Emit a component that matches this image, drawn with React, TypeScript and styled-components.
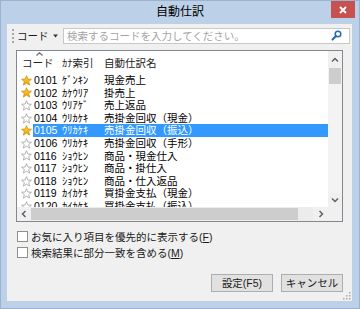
import styled, { createGlobalStyle } from "styled-components";

const GlobalStyle = createGlobalStyle`
  html, body {
    margin: 0;
    padding: 0;
    background: #bcd1e8;
  }
  body {
    font-family: "Liberation Sans", "Noto Sans CJK JP", sans-serif;
    font-size: 10.5px;
    color: #000;
  }
`;

const StyledWindow = styled.div`
  width: 360px;
  height: 309px;
  box-sizing: border-box;
  display: flex;
  flex-direction: column;
  background: #bcd1e8;
  border: 1px solid #9ab3d1;
`;

const StyledTitleBar = styled.div`
  height: 23px;
  display: grid;
  grid-template-columns: 1fr auto 1fr;
`;

const StyledTitle = styled.div`
  grid-column: 2;
  line-height: 23px;
  font-size: 12px;
  color: #000;
`;

const StyledClose = styled.div`
  grid-column: 3;
  justify-self: end;
  align-self: start;
  margin-right: 4px;
  width: 24px;
  height: 17px;
  background: #c75050;
  display: flex;
  align-items: center;
  justify-content: center;
`;

const StyledClient = styled.div`
  position: relative;
  flex: 1;
  margin: 0 7px 7px 6px;
  background: #f0f0f0;
  display: flex;
  flex-direction: column;
`;

const StyledToolbar = styled.div`
  height: 23px;
  display: flex;
  align-items: center;
  padding: 0 2px 0 5px;
`;

const StyledGrip = styled.span`
  width: 0;
  height: 14px;
  border-left: 2px dotted #a8a8a8;
`;

const StyledDropLabel = styled.div`
  width: 46px;
  margin-left: 3px;
  box-sizing: border-box;
  display: flex;
  align-items: center;
  gap: 4px;
  color: #1a1a1a;
`;

const StyledSearchBox = styled.div`
  flex: 1;
  height: 16px;
  box-sizing: border-box;
  border: 1px solid #c8c8c8;
  background: #fff;
  display: flex;
  align-items: center;
  justify-content: space-between;
  padding: 0 7px 0 3px;
  color: #a3a3a3;
  line-height: 14px;
`;

const StyledList = styled.div`
  margin: 3px 9px 0 9px;
  height: 172px;
  box-sizing: border-box;
  border: 1px solid #828790;
  background: #fff;
  display: grid;
  grid-template-columns: 1fr 14px;
  grid-template-rows: 1fr 14px;
`;

const StyledContent = styled.div`
  min-height: 0;
  overflow: hidden;
`;

const StyledHeader = styled.div`
  height: 23px;
  display: flex;
  align-items: center;
  color: #222;
`;

const StyledHeadCell = styled.div<{ $width?: number; $pad?: number }>`
  position: relative;
  width: ${(p) => (p.$width ? `${p.$width}px` : "auto")};
  flex: ${(p) => (p.$width ? "none" : "1")};
  padding-left: ${(p) => p.$pad ?? 0}px;
  box-sizing: border-box;
  white-space: nowrap;
`;

const StyledSortMark = styled.span`
  position: absolute;
  left: 19px;
  top: -3px;
  display: flex;
`;

const StyledRow = styled.div`
  height: 12.6px;
  display: flex;
  align-items: stretch;
  white-space: nowrap;
`;

const StyledStarCell = styled.div`
  width: 16px;
  flex: none;
  padding-left: 4px;
  box-sizing: border-box;
  display: flex;
  align-items: center;
`;

const StyledRowBody = styled.div<{ $selected: boolean }>`
  flex: 1;
  display: flex;
  align-items: center;
  background: ${(p) => (p.$selected ? "#3399ff" : "transparent")};
  color: ${(p) => (p.$selected ? "#fff" : "#000")};
  line-height: 12.6px;
`;

const StyledCell = styled.div<{ $width?: number; $pad?: number }>`
  width: ${(p) => (p.$width ? `${p.$width}px` : "auto")};
  flex: ${(p) => (p.$width ? "none" : "1")};
  padding-left: ${(p) => p.$pad ?? 0}px;
  box-sizing: border-box;
  overflow: hidden;
`;

const StyledVScroll = styled.div`
  background: #f3f3f3;
  display: flex;
  flex-direction: column;
  align-items: stretch;
`;

const StyledHScroll = styled.div`
  background: #ececec;
  display: flex;
  align-items: stretch;
`;

const StyledArrowBox = styled.div<{ $size: number; $vertical?: boolean }>`
  flex: none;
  ${(p) => (p.$vertical ? `height: ${p.$size}px;` : `width: ${p.$size}px;`)}
  display: flex;
  align-items: center;
  justify-content: center;
  background: #f0f0f0;
`;

const StyledThumb = styled.div<{ $length: number; $vertical?: boolean }>`
  flex: none;
  background: #cdcdcd;
  ${(p) =>
    p.$vertical
      ? `height: ${p.$length}px; margin: 0 1px;`
      : `width: ${p.$length}px; margin: 1px 0;`}
`;

const StyledSpacer = styled.div`
  flex: 1;
`;

const StyledCorner = styled.div`
  background: #f0f0f0;
`;

const StyledChecks = styled.div`
  margin-top: 6px;
  padding-left: 10px;
  display: flex;
  flex-direction: column;
`;

const StyledCheckRow = styled.label`
  height: 16px;
  display: flex;
  align-items: center;
  gap: 3px;
  color: #1a1a1a;
`;

const StyledCheckBox = styled.span`
  width: 11px;
  height: 11px;
  box-sizing: border-box;
  border: 1px solid #8f8f8f;
  background: #fff;
`;

const StyledButtons = styled.div`
  margin-top: auto;
  display: flex;
  justify-content: flex-end;
  gap: 8px;
  padding: 0 9px 9px 0;
`;

const StyledButton = styled.button`
  width: 62px;
  height: 18px;
  box-sizing: border-box;
  border: 1px solid #adadad;
  background: #e1e1e1;
  font-family: "Liberation Sans", "Noto Sans CJK JP", sans-serif;
  font-size: 10.5px;
  color: #1a1a1a;
  padding: 0;
  line-height: 16px;
`;

const StyledResizeGrip = styled.div`
  position: absolute;
  right: 1px;
  bottom: 1px;
  display: flex;
`;

type Entry = { code: string; kana: string; name: string; fav: boolean };

const entries: Entry[] = [
  { code: "0101", kana: "ｹﾞﾝｷﾝ", name: "現金売上", fav: true },
  { code: "0102", kana: "ｶｹｳﾘｱ", name: "掛売上", fav: true },
  { code: "0103", kana: "ｳﾘｱｹﾞ", name: "売上返品", fav: false },
  { code: "0104", kana: "ｳﾘｶｹｷ", name: "売掛金回収（現金）", fav: false },
  { code: "0105", kana: "ｳﾘｶｹｷ", name: "売掛金回収（振込）", fav: true },
  { code: "0106", kana: "ｳﾘｶｹｷ", name: "売掛金回収（手形）", fav: false },
  { code: "0116", kana: "ｼｮｳﾋﾝ", name: "商品・現金仕入", fav: false },
  { code: "0117", kana: "ｼｮｳﾋﾝ", name: "商品・掛仕入", fav: false },
  { code: "0118", kana: "ｼｮｳﾋﾝ", name: "商品・仕入返品", fav: false },
  { code: "0119", kana: "ｶｲｶｹｷ", name: "買掛金支払（現金）", fav: false },
  { code: "0120", kana: "ｶｲｶｹｷ", name: "買掛金支払（振込）", fav: false },
];

const selectedCode = "0105";

function Star({ filled }: { filled: boolean }) {
  return (
    <svg width="11" height="11" viewBox="0 0 24 24">
      <defs>
        <linearGradient id="starGold" x1="0" y1="0" x2="0" y2="1">
          <stop offset="0" stopColor="#ffd54a" />
          <stop offset="1" stopColor="#f0a000" />
        </linearGradient>
      </defs>
      <polygon
        points="12,1.5 15,8.8 22.8,9.3 16.8,14.3 18.8,22 12,17.7 5.2,22 7.2,14.3 1.2,9.3 9,8.8"
        fill={filled ? "url(#starGold)" : "#fff"}
        stroke={filled ? "#d08800" : "#9a9a9a"}
        strokeWidth="1.6"
        strokeLinejoin="round"
      />
    </svg>
  );
}

function Chevron({ dir }: { dir: "up" | "down" | "left" | "right" }) {
  const rotate = { up: 0, right: 90, down: 180, left: 270 }[dir];
  return (
    <svg width="8" height="8" viewBox="0 0 8 8" style={{ transform: `rotate(${rotate}deg)` }}>
      <path d="M1 5.5 L4 2.5 L7 5.5" fill="none" stroke="#606060" strokeWidth="1.5" />
    </svg>
  );
}

export default function App() {
  return (
    <>
      <GlobalStyle />
      <StyledWindow>
        <StyledTitleBar>
          <StyledTitle>自動仕訳</StyledTitle>
          <StyledClose>
            <svg width="8" height="8" viewBox="0 0 8 8">
              <path d="M1 1 L7 7 M7 1 L1 7" stroke="#fff" strokeWidth="1.8" />
            </svg>
          </StyledClose>
        </StyledTitleBar>

        <StyledClient>
          <StyledToolbar>
            <StyledGrip />
            <StyledDropLabel>
              コード
              <svg width="5" height="4" viewBox="0 0 5 4">
                <path d="M0 0.5 L5 0.5 L2.5 3.5 Z" fill="#333" />
              </svg>
            </StyledDropLabel>
            <StyledSearchBox>
              検索するコードを入力してください。
              <svg width="11" height="11" viewBox="0 0 11 11">
                <circle cx="7" cy="4" r="2.8" fill="none" stroke="#2467b3" strokeWidth="1.5" />
                <path d="M5 6 L1.5 9.5" stroke="#2467b3" strokeWidth="2" strokeLinecap="round" />
              </svg>
            </StyledSearchBox>
          </StyledToolbar>

          <StyledList>
            <StyledContent>
              <StyledHeader>
                <StyledHeadCell $width={45} $pad={5}>
                  コード
                  <StyledSortMark>
                    <svg width="7" height="4" viewBox="0 0 7 4">
                      <path d="M0.5 3.5 L3.5 0.8 L6.5 3.5" fill="none" stroke="#6a6a6a" strokeWidth="1.2" />
                    </svg>
                  </StyledSortMark>
                </StyledHeadCell>
                <StyledHeadCell $width={42}>ｶﾅ索引</StyledHeadCell>
                <StyledHeadCell>自動仕訳名</StyledHeadCell>
              </StyledHeader>
              {entries.map((e) => (
                <StyledRow key={e.code}>
                  <StyledStarCell>
                    <Star filled={e.fav} />
                  </StyledStarCell>
                  <StyledRowBody $selected={e.code === selectedCode}>
                    <StyledCell $width={29} $pad={1}>
                      {e.code}
                    </StyledCell>
                    <StyledCell $width={42}>{e.kana}</StyledCell>
                    <StyledCell>{e.name}</StyledCell>
                  </StyledRowBody>
                </StyledRow>
              ))}
            </StyledContent>

            <StyledVScroll>
              <StyledArrowBox $size={17} $vertical>
                <Chevron dir="up" />
              </StyledArrowBox>
              <StyledThumb $length={16} $vertical />
              <StyledSpacer />
              <StyledArrowBox $size={14} $vertical>
                <Chevron dir="down" />
              </StyledArrowBox>
            </StyledVScroll>

            <StyledHScroll>
              <StyledArrowBox $size={14}>
                <Chevron dir="left" />
              </StyledArrowBox>
              <StyledThumb $length={267} />
              <StyledSpacer />
              <StyledArrowBox $size={15}>
                <Chevron dir="right" />
              </StyledArrowBox>
            </StyledHScroll>
            <StyledCorner />
          </StyledList>

          <StyledChecks>
            <StyledCheckRow>
              <StyledCheckBox />
              <span>
                お気に入り項目を優先的に表示する(<u>F</u>)
              </span>
            </StyledCheckRow>
            <StyledCheckRow>
              <StyledCheckBox />
              <span>
                検索結果に部分一致を含める(<u>M</u>)
              </span>
            </StyledCheckRow>
          </StyledChecks>

          <StyledButtons>
            <StyledButton>設定(F5)</StyledButton>
            <StyledButton>キャンセル</StyledButton>
          </StyledButtons>

          <StyledResizeGrip>
            <svg width="8" height="8" viewBox="0 0 8 8">
              <g fill="#a8a8a8">
                <rect x="6" y="0" width="1.5" height="1.5" />
                <rect x="3" y="3" width="1.5" height="1.5" />
                <rect x="6" y="3" width="1.5" height="1.5" />
                <rect x="0" y="6" width="1.5" height="1.5" />
                <rect x="3" y="6" width="1.5" height="1.5" />
                <rect x="6" y="6" width="1.5" height="1.5" />
              </g>
            </svg>
          </StyledResizeGrip>
        </StyledClient>
      </StyledWindow>
    </>
  );
}
